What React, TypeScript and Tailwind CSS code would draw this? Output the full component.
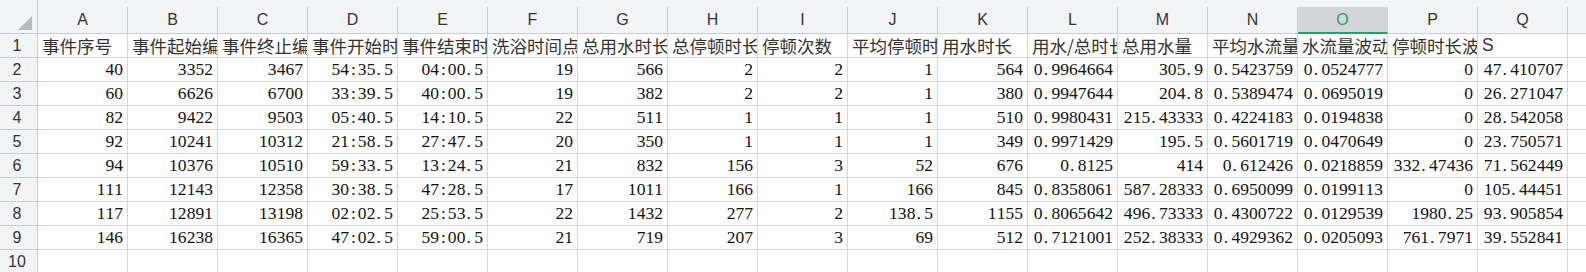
const cols = ["A", "B", "C", "D", "E", "F", "G", "H", "I", "J", "K", "L", "M", "N", "O", "P", "Q"];

const headers = [
  "事件序号",
  "事件起始编号",
  "事件终止编号",
  "事件开始时间",
  "事件结束时间",
  "洗浴时间点",
  "总用水时长",
  "总停顿时长",
  "停顿次数",
  "平均停顿时长",
  "用水时长",
  "用水/总时长",
  "总用水量",
  "平均水流量",
  "水流量波动",
  "停顿时长波动",
  "S",
];

const rows = [
  ["40", "3352", "3467", "54:35.5", "04:00.5", "19", "566", "2", "2", "1", "564", "0.9964664", "305.9", "0.5423759", "0.0524777", "0", "47.410707"],
  ["60", "6626", "6700", "33:39.5", "40:00.5", "19", "382", "2", "2", "1", "380", "0.9947644", "204.8", "0.5389474", "0.0695019", "0", "26.271047"],
  ["82", "9422", "9503", "05:40.5", "14:10.5", "22", "511", "1", "1", "1", "510", "0.9980431", "215.43333", "0.4224183", "0.0194838", "0", "28.542058"],
  ["92", "10241", "10312", "21:58.5", "27:47.5", "20", "350", "1", "1", "1", "349", "0.9971429", "195.5", "0.5601719", "0.0470649", "0", "23.750571"],
  ["94", "10376", "10510", "59:33.5", "13:24.5", "21", "832", "156", "3", "52", "676", "0.8125", "414", "0.612426", "0.0218859", "332.47436", "71.562449"],
  ["111", "12143", "12358", "30:38.5", "47:28.5", "17", "1011", "166", "1", "166", "845", "0.8358061", "587.28333", "0.6950099", "0.0199113", "0", "105.44451"],
  ["117", "12891", "13198", "02:02.5", "25:53.5", "22", "1432", "277", "2", "138.5", "1155", "0.8065642", "496.73333", "0.4300722", "0.0129539", "1980.25", "93.905854"],
  ["146", "16238", "16365", "47:02.5", "59:00.5", "21", "719", "207", "3", "69", "512", "0.7121001", "252.38333", "0.4929362", "0.0205093", "761.7971", "39.552841"],
];

const sans = "font-['Liberation_Sans','Noto_Sans',sans-serif]";
const cjk = "font-['Noto_Sans_CJK_SC',sans-serif]";
const num = "font-['Liberation_Serif','Noto_Sans_CJK_SC',serif]";

// half-width punctuation like SimSun: every char takes the same width
function Num({ v }: { v: string }) {
  return (
    <>
      {v.split("").map((ch, i) =>
        ch === "." ? (
          <span key={i} className="inline-block w-[8.8px] pl-[1px]">.</span>
        ) : ch === ":" ? (
          <span key={i} className="inline-block w-[8.8px] text-center">:</span>
        ) : (
          <span key={i} className="inline-block w-[8.8px] text-center">{ch}</span>
        )
      )}
    </>
  );
}

function RowNumber({ n }: { n: number }) {
  return (
    <div className={`flex h-[24px] items-center justify-center border-r border-b border-[#c9cdd8] bg-[#f3f4f6] pr-[3px] text-[16px] text-[#333] ${sans}`}>
      {n}
    </div>
  );
}

export default function App() {
  return (
    <div className="h-[272px] w-[1586px] overflow-hidden bg-white">
      <div className="grid grid-cols-[38px_repeat(17,90px)_1fr]">
        {/* column header */}
        <div className="relative h-[34px] border-r border-b border-[#c9cdd8] bg-[#f3f4f6]">
          <svg className="absolute left-[18px] top-[16px]" width="14" height="14" viewBox="0 0 14 14">
            <polygon points="14,0 14,14 0,14" fill="#b7b9bd" />
          </svg>
        </div>
        {cols.map((c) => {
          const active = c === "O";
          return (
            <div key={c} className="flex h-[34px] flex-col bg-[#f3f4f6]">
              <div className="h-[7px]" />
              <div
                className={`flex flex-1 items-center justify-center border-r text-[16px] ${sans} ${
                  active
                    ? "border-b-2 border-[#d2d4da] border-b-[#21a366] bg-[#d3d5db] text-[#1fa463]"
                    : "border-b border-[#c9cdd8] text-[#333]"
                }`}
              >
                {c}
              </div>
            </div>
          );
        })}
        <div className="flex h-[34px] flex-col bg-[#f3f4f6]">
          <div className="h-[7px]" />
          <div className="flex-1 border-b border-[#c9cdd8]" />
        </div>

        {/* row 1 */}
        <RowNumber n={1} />
        {headers.map((h, i) => (
          <div
            key={i}
            className={`flex h-[24px] items-center overflow-hidden whitespace-nowrap border-r border-b border-[#d4d7e0] pl-[4px] text-[17.5px] leading-none text-[#333] ${
              h === "S" ? sans : cjk
            }`}
          >
            {h}
          </div>
        ))}
        <div className="h-[24px] border-b border-[#d4d7e0]" />

        {/* data rows */}
        {rows.map((r, ri) => (
          <div key={ri} className="contents">
            <RowNumber n={ri + 2} />
            {r.map((v, ci) => (
              <div
                key={ci}
                className={`flex h-[24px] items-center justify-end overflow-hidden whitespace-nowrap border-r border-b border-[#d4d7e0] pr-[4px] text-[17.5px] leading-none text-[#111] ${num}`}
              >
                <Num v={v} />
              </div>
            ))}
            <div className="h-[24px] border-b border-[#d4d7e0]" />
          </div>
        ))}

        {/* row 10 */}
        <RowNumber n={10} />
        {cols.map((c) => (
          <div key={c} className="h-[24px] border-r border-b border-[#d4d7e0]" />
        ))}
        <div className="h-[24px] border-b border-[#d4d7e0]" />
      </div>
    </div>
  );
}
